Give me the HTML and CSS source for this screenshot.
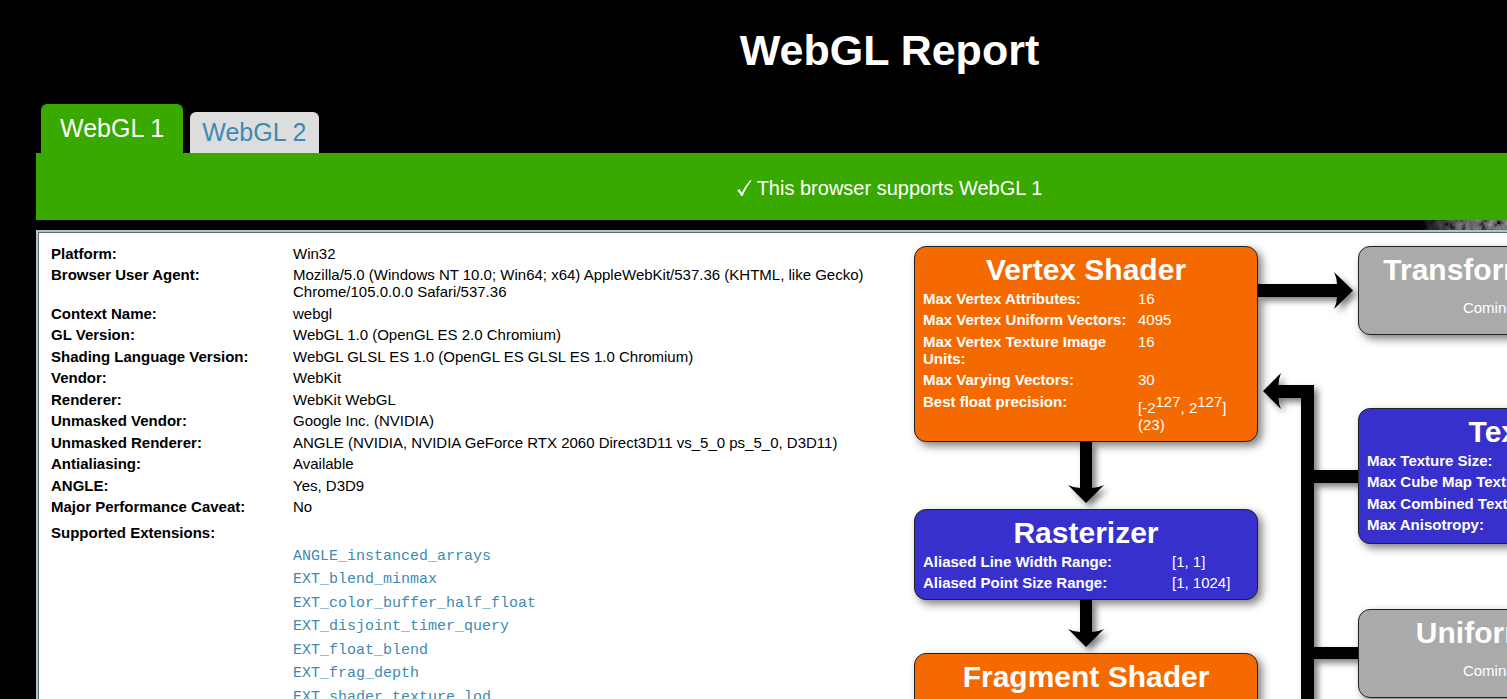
FILE: index.html
```html
<!DOCTYPE html>
<html lang="en">
<head>
<meta charset="utf-8">
<title>WebGL Report</title>
<link rel="stylesheet" href="styles.css">
</head>
<body>
<div class="page">
  <svg class="moon" viewBox="0 0 160 120" aria-hidden="true">
    <defs>
      <filter id="craters" x="0" y="0" width="100%" height="100%">
        <feTurbulence type="fractalNoise" baseFrequency="0.13" numOctaves="3" seed="8"/>
        <feColorMatrix values="1 0 0 0 -0.28  1 0 0 0 -0.28  1 0 0 0 -0.28  0 0 0 0 1"/>
      </filter>
      <linearGradient id="limb" x1="0" y1="0" x2="1" y2="0">
        <stop offset="0" stop-color="#000"/>
        <stop offset=".08" stop-color="#222"/>
        <stop offset=".3" stop-color="#bbb"/>
        <stop offset="1" stop-color="#fff"/>
      </linearGradient>
      <mask id="edge"><path d="M0 110 Q30 50 160 8 V120 H0Z" fill="url(#limb)"/></mask>
    </defs>
    <g mask="url(#edge)">
      <rect width="160" height="120" filter="url(#craters)"/>
      <g fill="#888" fill-opacity=".4" stroke="#aaa" stroke-opacity=".5">
        <circle cx="42" cy="97" r="5"/><circle cx="68" cy="96" r="6"/><circle cx="88" cy="98" r="4"/>
      </g>
    </g>
  </svg>
  <header class="header"><h1>WebGL Report</h1></header>
  <nav class="tabs" aria-label="WebGL version">
    <a class="tab tab-active" href="#webgl1">WebGL 1</a>
    <a class="tab" href="#webgl2">WebGL 2</a>
  </nav>
  <div class="banner">
    <svg class="check" viewBox="0 0 15 18" aria-hidden="true"><path d="M0 11.500 L2.500 10 Q4 12 4.500 14 Q8 6.500 13.500 1 L14.500 1.500 Q9 8.500 5.500 17 H4 Q2.500 13 0 11.500Z"/></svg>
    <span>This browser supports WebGL 1</span>
  </div>
  <main class="report" id="webgl1">
    <section class="info">
      <table class="facts">
        <tr><th scope="row">Platform:</th><td>Win32</td></tr>
        <tr><th scope="row">Browser User Agent:</th><td>Mozilla/5.0 (Windows NT 10.0; Win64; x64) AppleWebKit/537.36 (KHTML, like Gecko) Chrome/105.0.0.0 Safari/537.36</td></tr>
        <tr><th scope="row">Context Name:</th><td>webgl</td></tr>
        <tr><th scope="row">GL Version:</th><td>WebGL 1.0 (OpenGL ES 2.0 Chromium)</td></tr>
        <tr><th scope="row">Shading Language Version:</th><td>WebGL GLSL ES 1.0 (OpenGL ES GLSL ES 1.0 Chromium)</td></tr>
        <tr><th scope="row">Vendor:</th><td>WebKit</td></tr>
        <tr><th scope="row">Renderer:</th><td>WebKit WebGL</td></tr>
        <tr><th scope="row">Unmasked Vendor:</th><td>Google Inc. (NVIDIA)</td></tr>
        <tr><th scope="row">Unmasked Renderer:</th><td>ANGLE (NVIDIA, NVIDIA GeForce RTX 2060 Direct3D11 vs_5_0 ps_5_0, D3D11)</td></tr>
        <tr><th scope="row">Antialiasing:</th><td>Available</td></tr>
        <tr><th scope="row">ANGLE:</th><td>Yes, D3D9</td></tr>
        <tr><th scope="row">Major Performance Caveat:</th><td>No</td></tr>
      </table>
      <h2 class="ext-title">Supported Extensions:</h2>
      <ul class="extensions">
        <li><a href="#ANGLE_instanced_arrays">ANGLE_instanced_arrays</a></li>
        <li><a href="#EXT_blend_minmax">EXT_blend_minmax</a></li>
        <li><a href="#EXT_color_buffer_half_float">EXT_color_buffer_half_float</a></li>
        <li><a href="#EXT_disjoint_timer_query">EXT_disjoint_timer_query</a></li>
        <li><a href="#EXT_float_blend">EXT_float_blend</a></li>
        <li><a href="#EXT_frag_depth">EXT_frag_depth</a></li>
        <li><a href="#EXT_shader_texture_lod">EXT_shader_texture_lod</a></li>
      </ul>
    </section>
    <section class="column">
      <div class="stage programmable">
        <h2>Vertex Shader</h2>
        <table class="facts vertex">
          <tr><th scope="row">Max Vertex Attributes:</th><td>16</td></tr>
          <tr><th scope="row">Max Vertex Uniform Vectors:</th><td>4095</td></tr>
          <tr><th scope="row">Max Vertex Texture Image Units:</th><td>16</td></tr>
          <tr><th scope="row">Max Varying Vectors:</th><td>30</td></tr>
          <tr><th scope="row">Best float precision:</th><td class="precision">[-2<sup>127</sup>, 2<sup>127</sup>]<br>(23)</td></tr>
        </table>
      </div>
      <svg class="arrow" width="48" height="67" viewBox="0 0 48 67" aria-hidden="true"><path d="M18 0H30V46Q36 46 42 43L24 61L6 43Q12 46 18 46Z"/></svg>
      <div class="stage fixed">
        <h2>Rasterizer</h2>
        <table class="facts raster">
          <tr><th scope="row">Aliased Line Width Range:</th><td>[1, 1]</td></tr>
          <tr><th scope="row">Aliased Point Size Range:</th><td>[1, 1024]</td></tr>
        </table>
      </div>
      <svg class="arrow" width="48" height="53" viewBox="0 0 48 53" aria-hidden="true"><path d="M18 0H30V32Q36 32 42 29L24 47L6 29Q12 32 18 32Z"/></svg>
      <div class="stage programmable">
        <h2>Fragment Shader</h2>
        <table class="facts vertex">
          <tr><th scope="row">Max Fragment Uniform Vectors:</th><td>1024</td></tr>
        </table>
      </div>
    </section>
    <svg class="links" width="100" height="520" viewBox="0 0 100 520" aria-hidden="true">
      <path d="M0 38H79Q79 32 76 26L95 44.500L76 63Q79 57 79 51H0Z"/>
      <path d="M5 145L23 127Q20.500 133 20.500 139H56V224H100V237H56V401H100V413H56V520H43V152H20.500Q20.500 158 23 163Z"/>
    </svg>
    <section class="column">
      <div class="stage unused">
        <h2>Transform Feedback</h2>
        <p>Coming in WebGL 2</p>
      </div>
      <div class="stage fixed textures">
        <h2>Textures</h2>
        <table class="facts raster">
          <tr><th scope="row">Max Texture Size:</th><td>16384</td></tr>
          <tr><th scope="row">Max Cube Map Texture Size:</th><td>16384</td></tr>
          <tr><th scope="row">Max Combined Texture Units:</th><td>32</td></tr>
          <tr><th scope="row">Max Anisotropy:</th><td>16</td></tr>
        </table>
      </div>
      <div class="stage unused uniforms">
        <h2>Uniform Buffers</h2>
        <p>Coming in WebGL 2</p>
      </div>
    </section>
  </main>
</div>
</body>
</html>
```
FILE: styles.css
```css
* { box-sizing: border-box; }

html {
  overflow: hidden;
  background: #000;
}

body {
  margin: 0;
  font: 15px/17px "Liberation Sans", Arial, sans-serif;
  color: #000;
}

.page {
  position: relative;
  min-width: 1743px;
  padding-left: 36px;
}

.moon {
  position: absolute;
  top: 130px;
  left: 1412px;
  width: 160px;
  height: 120px;
}

.header {
  padding: 24px 0 28px;
  text-align: center;
}

.header h1 {
  margin: 0;
  font-size: 43px;
  line-height: 52px;
  color: #fff;
}

.tabs {
  display: flex;
  align-items: flex-end;
  gap: 7px;
  padding-left: 5px;
}

.tab {
  padding: 5px 13px 6px 12px;
  border-radius: 6px 6px 0 0;
  background: #ddd;
  color: #3d8ab3;
  font-size: 25px;
  line-height: 30px;
  text-decoration: none;
}

.tab-active {
  padding: 9px 19px 10px;
  background: #39a900;
  color: #fff;
}

.banner {
  position: relative;
  display: flex;
  justify-content: center;
  align-items: center;
  gap: 5px;
  padding: 23px 0 20px;
  background: #39a900;
  color: #fff;
  font-size: 20px;
  line-height: 24px;
}

.check {
  width: 15px;
  height: 18px;
  fill: #fff;
}

.report {
  position: relative;
  display: grid;
  grid-template-columns: 1fr 344px 100px 344px;
  align-items: start;
  margin-top: 10px;
  padding: 14px 39px 24px 11px;
  border: 2px solid #b0c4c8;
  background: #fff;
  box-shadow: inset 1px 1px #5f7072;
}

.info {
  margin-top: -3px;
  padding-right: 32px;
}

.facts {
  width: 100%;
  border-collapse: collapse;
  table-layout: fixed;
}

.facts th,
.facts td {
  padding: 2px;
  text-align: left;
  vertical-align: top;
}

.facts tr:nth-child(even) > * { padding-bottom: 3px; }

.facts th { width: 242px; }

.ext-title {
  margin: 6px 0 4px;
  padding-left: 2px;
  font-size: 15px;
  line-height: 17px;
}

.extensions {
  margin: 0;
  padding-left: 244px;
  list-style: none;
  font-family: "Liberation Mono", "Courier New", monospace;
}

.extensions li { padding: 3px 0; }
.extensions li:nth-child(even) { padding-bottom: 4px; }

.extensions a {
  color: #3d8ab3;
  text-decoration: none;
}

.column {
  display: flex;
  flex-direction: column;
}

.stage {
  position: relative;
  padding: 6px 6px 5px;
  border: 1px solid #222;
  border-radius: 12px;
  box-shadow: 4px 4px 8px rgba(0, 0, 0, .5);
  color: #fff;
}

.stage h2 {
  margin: 0 0 1px;
  font-size: 30px;
  line-height: 34px;
  text-align: center;
}

.stage p {
  margin: 12px 0 13px;
  text-align: center;
}

.programmable { background: #f56a00; }
.fixed { background: #3730cc; }
.unused { background: #aaa; }

.vertex th { width: 215px; }
.vertex .precision {
  padding-top: 8px;
  padding-bottom: 3px;
}
.raster th { width: 249px; }
.precision sup {
  font-size: 15px;
  line-height: 0;
}

.textures {
  margin-top: 73px;
  padding-bottom: 7px;
}
.uniforms { margin-top: 65px; }

.arrow { align-self: center; }

.arrow,
.links {
  display: block;
  overflow: visible;
  filter: drop-shadow(4px 4px 3px rgba(0, 0, 0, .5));
}
```
